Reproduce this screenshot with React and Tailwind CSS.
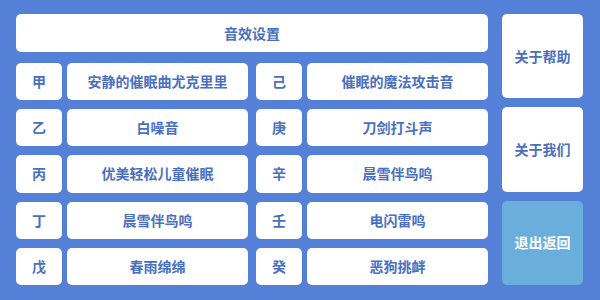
import React from "react";

const rows = [
  { a: "甲", b: "安静的催眠曲尤克里里", c: "己", d: "催眠的魔法攻击音" },
  { a: "乙", b: "白噪音", c: "庚", d: "刀剑打斗声" },
  { a: "丙", b: "优美轻松儿童催眠", c: "辛", d: "晨雪伴鸟鸣" },
  { a: "丁", b: "晨雪伴鸟鸣", c: "壬", d: "电闪雷鸣" },
  { a: "戊", b: "春雨绵绵", c: "癸", d: "恶狗挑衅" },
];

const Cell = ({ children }) => (
  <div className="flex items-center justify-center rounded-[5px] bg-white text-[14px] font-bold text-[#4a6fc1]">
    {children}
  </div>
);

const App = () => {
  return (
    <div
      className="flex h-[300px] w-[600px] gap-[14px] bg-[#5580d8] pl-[16px] pr-[17px] pt-[14px] pb-[15px]"
      style={{ fontFamily: '"Noto Sans CJK SC", "Noto Sans", sans-serif' }}
    >
      {/* Sound list */}
      <div className="flex w-[472px] flex-col">
        <div className="flex h-[38px] items-center justify-center rounded-[5px] bg-white text-[14px] font-bold text-[#4a6fc1]">
          音效设置
        </div>
        <div className="mt-[11px] grid flex-1 grid-cols-[46px_186px_54px_186px] grid-rows-5 gap-y-[9px]">
          {rows.map((r) => (
            <React.Fragment key={r.a}>
              <Cell>{r.a}</Cell>
              <div className="ml-[5px] grid">
                <Cell>{r.b}</Cell>
              </div>
              <div className="ml-[8px] grid">
                <Cell>{r.c}</Cell>
              </div>
              <div className="ml-[5px] grid">
                <Cell>{r.d}</Cell>
              </div>
            </React.Fragment>
          ))}
        </div>
      </div>

      {/* Side menu */}
      <div className="flex flex-1 flex-col gap-[9px]">
        <div className="flex flex-1 items-center justify-center rounded-[5px] bg-white text-[14px] font-bold text-[#4a6fc1]">
          关于帮助
        </div>
        <div className="flex flex-1 items-center justify-center rounded-[5px] bg-white text-[14px] font-bold text-[#4a6fc1]">
          关于我们
        </div>
        <div className="flex flex-1 items-center justify-center rounded-[5px] bg-[#6aafdb] text-[14px] font-bold text-white">
          退出返回
        </div>
      </div>
    </div>
  );
};

export default App;
